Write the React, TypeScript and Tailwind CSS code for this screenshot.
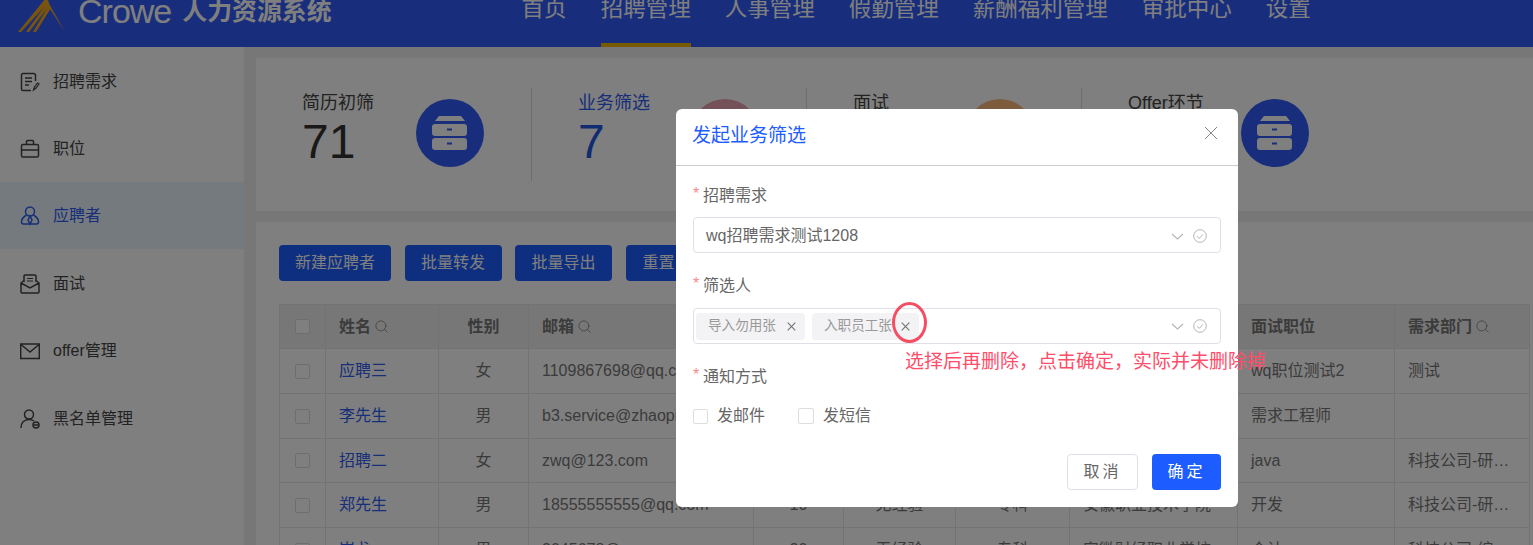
import React from "react";
import { Search } from "lucide-react";

const FONT = "font-['Liberation_Sans','Noto_Sans_CJK_SC',sans-serif]";

function Logo() {
  return (
    <svg width="52" height="36" viewBox="0 0 52 36" className="shrink-0">
      <path d="M29 0 L47 32 L30 6 L27 4Z" fill="#f0a81e" />
      <path d="M28 -2 L0 32 L3 32 L31 2Z" fill="#f0a81e" />
      <path d="M29 3 L8 32 L11 32 L31 6Z" fill="#f0a81e" />
      <path d="M31 5 L15 32 L18 32 L33 8Z" fill="#f0a81e" />
    </svg>
  );
}

function Drawer() {
  return (
    <svg width="36" height="34" viewBox="0 0 36 34" fill="#fff">
      <path d="M7 0H29L33 5H3Z" />
      <rect x="0" y="8" width="35" height="12" rx="3" />
      <rect x="0" y="22" width="35" height="12" rx="3" />
      <rect x="15" y="12.5" width="5" height="2" fill="#305cf8" />
      <rect x="15" y="26.5" width="5" height="2" fill="#305cf8" />
    </svg>
  );
}

function Icon({ name, active }: { name: string; active?: boolean }) {
  const c = active ? "#2f5cf0" : "#444";
  const p = { fill: "none", stroke: c, strokeWidth: 1.5 };
  return (
    <svg width="20" height="20" viewBox="0 0 20 20" className="shrink-0">
      {name === "req" && (
        <g {...p}>
          <path d="M15.5 9V3.5a2 2 0 0 0-2-2H3a1.5 1.5 0 0 0-1.5 1.5v14A1.5 1.5 0 0 0 3 18.500h8" />
          <path d="M5 6h7M5 9.500h7M5 13h4" />
          <path d="M13.500 18l1-3 3-4 1.500 1-3 4z" strokeWidth="1.200" />
        </g>
      )}
      {name === "job" && (
        <g {...p}>
          <rect x="1.500" y="5.500" width="17" height="12.500" rx="1.500" />
          <path d="M6.500 5.500V2.500a1 1 0 0 1 1-1h5a1 1 0 0 1 1 1v3M1.500 11h17" />
        </g>
      )}
      {name === "person" && (
        <g {...p}>
          <circle cx="10" cy="5.500" r="4.500" />
          <path d="M6.500 9C3 11 1.500 13 1.500 16a2 2 0 0 0 2 2h13a2 2 0 0 0 2-2c0-3-1.500-5-5-7" />
          <path d="M10 10l-2 4 2 4 2-4z" />
        </g>
      )}
      {name === "mailopen" && (
        <g {...p}>
          <path d="M4 8V2a1 1 0 0 1 1-1h10a1 1 0 0 1 1 1v6" />
          <path d="M7 4.500h6M7 7h6" strokeWidth="1" />
          <path d="M4 6.500L1 9v9a1 1 0 0 0 1 1h16a1 1 0 0 0 1-1V9l-3-2.500M1 9l9 5 9-5" />
        </g>
      )}
      {name === "mail" && (
        <g {...p}>
          <rect x="0.700" y="3" width="18.600" height="14.500" />
          <path d="M1 3.500l9 7.500 9-7.500" />
        </g>
      )}
      {name === "black" && (
        <g {...p}>
          <circle cx="9" cy="5.500" r="4.500" />
          <path d="M1 19c0-5 3-8.500 8-8.500 2 0 3.500.5 5 1.500" />
          <circle cx="16" cy="16" r="3" />
          <path d="M13.500 16h5" />
        </g>
      )}
    </svg>
  );
}

const menu = [
  ["req", "招聘需求"],
  ["job", "职位"],
  ["person", "应聘者"],
  ["mailopen", "面试"],
  ["mail", "offer管理"],
  ["black", "黑名单管理"],
];

const stats = [
  { t: "简历初筛", n: "71", c: "bg-[#305cf8]" },
  { t: "业务筛选", n: "7", c: "bg-[#e8a0b0]", a: true },
  { t: "面试", n: "12", c: "bg-[#f8b878]" },
  { t: "Offer环节", n: "3", c: "bg-[#305cf8]" },
];

const rows = [
  ["应聘三", "女", "1109867698@qq.com", "5", "一年以内", "本科", "安徽大学", "wq职位测试2", "测试"],
  ["李先生", "男", "b3.service@zhaopin.com", "8", "三到五年", "本科", "合肥工业大学", "需求工程师", ""],
  ["招聘二", "女", "zwq@123.com", "6", "一到三年", "本科", "安徽农业大学", "java", "科技公司-研发中心"],
  ["郑先生", "男", "18555555555@qq.com", "10", "无经验", "专科", "安徽职业技术学院", "开发", "科技公司-研发中心"],
  ["崔戈", "男", "3045678@qq.com", "20", "无经验", "专科", "安徽财经职业学校", "会计", "科技公司-综合部门"],
];

function Th({ children, search, center }: { children?: React.ReactNode; search?: boolean; center?: boolean }) {
  return (
    <th className={`border border-[#e6e6e6] px-[13px] font-bold text-[#777] ${center ? "text-center" : "text-left"}`}>
      <span className="inline-flex items-center gap-[3px]">
        {children}
        {search && <Search size={15} strokeWidth={1.4} className="text-[#888]" />}
      </span>
    </th>
  );
}

function Td({ children, center }: { children?: React.ReactNode; center?: boolean }) {
  return (
    <td className={`truncate border border-[#e6e6e6] px-[13px] text-[#777] ${center ? "text-center" : "text-left"}`}>{children}</td>
  );
}

function Check({ className = "" }: { className?: string }) {
  return <span className={`block h-[15px] w-[15px] rounded-[2px] border border-[#ddd] bg-white ${className}`} />;
}

function SelectSuffix() {
  return (
    <span className="ml-auto flex shrink-0 items-center gap-[9px]">
      <svg width="13" height="7" viewBox="0 0 13 7" fill="none" stroke="#b5b5b5" strokeWidth="1.100">
        <path d="M1 1l5.500 5L12 1" />
      </svg>
      <svg width="14" height="14" viewBox="0 0 14 14" fill="none" stroke="#b5b5b5" strokeWidth="1">
        <circle cx="7" cy="7" r="6.300" />
        <path d="M4 7.200l2.200 2.200L10 5.300" />
      </svg>
    </span>
  );
}

function Label({ children }: { children: React.ReactNode }) {
  return (
    <div className="flex h-[22px] items-center pt-[1px] text-[16px] leading-[22px] text-[#666]">
      <span className="mt-[-4px] w-[10px] text-[16px] text-[#f78a8a]">*</span>
      {children}
    </div>
  );
}

function Tag({ children, className = "" }: { children: React.ReactNode; className?: string }) {
  return (
    <span className={`flex h-[27px] items-center justify-between rounded-[4px] bg-[#f3f3f5] pl-[12px] pr-[9px] text-[13.600px] text-[#999] ${className}`}>
      {children}
      <svg width="9" height="9" viewBox="0 0 9 9" stroke="#777" strokeWidth="1.200">
        <path d="M.7.700l7.600 7.600M8.300.700L.7 8.300" />
      </svg>
    </span>
  );
}

export default function App() {
  return (
    <div className={`relative h-[545px] w-full overflow-hidden bg-white ${FONT}`}>
      <header className="flex h-[47px] bg-[#305cf8]">
        <div className="ml-[18px] flex h-[47px] items-start overflow-hidden">
          <Logo />
          <span className="ml-[8px] mt-[-11px] text-[34px] font-normal leading-[44px] tracking-[-1px] text-white">Crowe</span>
          <span className="ml-[11px] mt-[-6px] text-[24.900px] font-bold leading-[34px] text-white">人力资源系统</span>
        </div>
        <nav className="ml-[190px] flex gap-[34px] text-[22.500px] text-white">
          {["首页", "招聘管理", "人事管理", "假勤管理", "薪酬福利管理", "审批中心", "设置"].map((t, i) => (
            <span key={t} className={`h-[47px] leading-[18px] ${i === 1 ? "border-b-4 border-[#f0b400]" : ""}`}>
              {t}
            </span>
          ))}
        </nav>
      </header>

      <div className="flex h-[498px]">
        <aside className="w-[244px] shrink-0 bg-white">
          {menu.map(([icon, text], i) => (
            <div
              key={text}
              className={`flex h-[67.400px] items-center gap-[13px] pl-[20px] pt-[2px] text-[16px] ${i === 2 ? "bg-[#eaf5ff] text-[#2f5cf0]" : "text-[#444]"}`}
            >
              <Icon name={icon} active={i === 2} />
              {text}
            </div>
          ))}
        </aside>

        <main className="min-w-0 flex-1 bg-[#eee] pl-[12px] pt-[11px]">
          <section className="flex h-[153px] bg-white py-[30px]">
            {stats.map((s, i) => (
              <div key={s.t} className={`flex h-[93px] w-[275px] shrink-0 pl-[46px] ${i ? "border-l border-[#ddd]" : ""}`}>
                <div className={`shrink-0 ${i ? "w-[113px]" : "w-[114px]"}`}>
                  <div className={`text-[18px] leading-[30px] ${s.a ? "text-[#2f5cf0]" : "text-[#444]"}`}>{s.t}</div>
                  <div className={`text-[48px] leading-[48px] ${s.a ? "text-[#2358e0]" : "text-[#333]"}`}>{s.n}</div>
                </div>
                <div className={`mt-[11px] flex h-[68px] w-[68px] shrink-0 items-center justify-center rounded-full ${s.c}`}>
                  <Drawer />
                </div>
              </div>
            ))}
          </section>

          <section className="mt-[11px] h-[323px] overflow-hidden bg-white pl-[23px] pt-[23px]">
            <div className="flex gap-[13.500px] text-[16px] text-white">
              {[
                ["新建应聘者", "w-[112px]"],
                ["批量转发", "w-[97px]"],
                ["批量导出", "w-[97px]"],
                ["重置", "w-[66px]"],
                ["批量删除", "w-[97px]"],
              ].map(([t, w]) => (
                <button key={t} className={`flex h-[36px] items-center justify-center rounded-[4px] bg-[#1d5cff] ${w}`}>
                  {t}
                </button>
              ))}
            </div>

            <table className="mt-[23px] w-[1250px] table-fixed border-collapse text-[16px]">
              <colgroup>
                <col className="w-[46px]" />
                <col className="w-[113px]" />
                <col className="w-[90px]" />
                <col className="w-[225px]" />
                <col className="w-[90px]" />
                <col className="w-[112px]" />
                <col className="w-[114px]" />
                <col className="w-[168px]" />
                <col className="w-[157px]" />
                <col className="w-[135px]" />
              </colgroup>
              <thead>
                <tr className="h-[44px] bg-[#eee]">
                  <th className="border border-[#e6e6e6]">
                    <Check className="mx-auto" />
                  </th>
                  <Th search>姓名</Th>
                  <Th center>性别</Th>
                  <Th search>邮箱</Th>
                  <Th center>年龄</Th>
                  <Th center>工作经验</Th>
                  <Th center>学历</Th>
                  <Th>毕业院校</Th>
                  <Th>面试职位</Th>
                  <Th search>需求部门</Th>
                </tr>
              </thead>
              <tbody>
                {rows.map((r, i) => (
                  <tr key={r[0]} className={i === 2 ? "h-[44px]" : "h-[45px]"}>
                    <td className="border border-[#e6e6e6]">
                      <Check className="mx-auto" />
                    </td>
                    <td className="border border-[#e6e6e6] px-[13px] text-[#2f5cf0]">{r[0]}</td>
                    <Td center>{r[1]}</Td>
                    <Td>{r[2]}</Td>
                    <Td center>{r[3]}</Td>
                    <Td center>{r[4]}</Td>
                    <Td center>{r[5]}</Td>
                    <Td>{r[6]}</Td>
                    <Td>{r[7]}</Td>
                    <Td>{r[8]}</Td>
                  </tr>
                ))}
              </tbody>
            </table>
          </section>
        </main>
      </div>

      <div className="absolute inset-0 bg-black/50" />

      <div className="absolute left-[676px] top-[109px] h-[398px] w-[562px] rounded-[6px] bg-white">
        <div className="flex h-[57px] items-center justify-between border-b border-[#ccc] pl-[16px] pr-[20px]">
          <span className="mt-[-1px] text-[19px] text-[#1d5cff]">发起业务筛选</span>
          <svg width="14" height="14" viewBox="0 0 14 14" stroke="#888" strokeWidth="1" className="mt-[-8px]">
            <path d="M1 1l12 12M13 1L1 13" />
          </svg>
        </div>
        <div className="px-[17px] pt-[18px]">
          <Label>招聘需求</Label>
          <div className="mt-[11px] flex h-[36px] items-center rounded-[4px] border border-[#dfdfe8] pb-0 pl-[12px] pr-[13px] pt-[2px] text-[16px] text-[#666]">
            wq招聘需求测试1208
            <SelectSuffix />
          </div>
          <div className="mt-[21px]">
            <Label>筛选人</Label>
          </div>
          <div className="mt-[12px] flex h-[36px] items-center gap-[7px] rounded-[4px] border border-[#dfdfe8] pl-[2px] pr-[13px]">
            <Tag className="w-[109px]">导入勿用张</Tag>
            <Tag className="w-[107px]">入职员工张</Tag>
            <SelectSuffix />
          </div>
          <div className="mt-[21px]">
            <Label>通知方式</Label>
          </div>
          <div className="mt-[17px] flex h-[24px] items-center text-[16px] text-[#666]">
            <Check />
            <span className="ml-[9px]">发邮件</span>
            <Check className="ml-[33px] h-[16px] w-[16px]" />
            <span className="ml-[9px]">发短信</span>
          </div>
          <div className="mt-[26px] flex justify-end gap-[14px]">
            <button className="h-[36px] w-[71px] rounded-[4px] border border-[#dfdfe8] bg-white text-[16px] tracking-[3px] text-[#666]">取消</button>
            <button className="h-[36px] w-[69px] rounded-[4px] bg-[#1d5cff] text-[16px] tracking-[3px] text-white">确定</button>
          </div>
        </div>
      </div>

      <div className="absolute left-[892px] top-[302px] h-[41px] w-[35px] rounded-[50%] border-[3px] border-[#f54d62]" />
      <div className="absolute left-[905px] top-[350px] text-[19px] leading-[24px] text-[#ff4d6a]">{"选择后再删除\uFF0C点击确定\uFF0C实际并未删除掉"}</div>
    </div>
  );
}
